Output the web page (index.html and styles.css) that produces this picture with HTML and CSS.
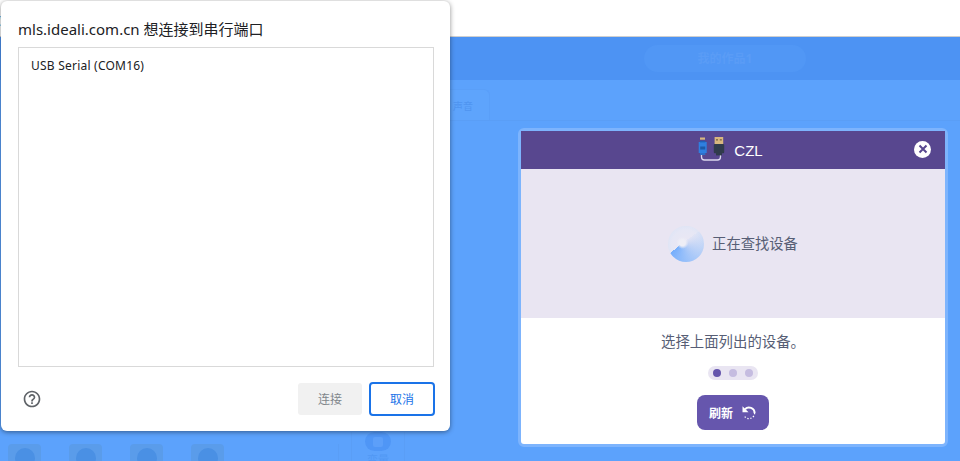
FILE: index.html
```html
<!DOCTYPE html>
<html lang="zh-CN">
<head>
	<meta charset="UTF-8">
	<title>连接设备</title>
	<link rel="stylesheet" href="styles.css">
</head>
<body>
	<div class="topbar"><span class="topbar-text">微</span></div>
	<div class="app">
		<div class="app-head">
			<div class="project-name">我的作品1</div>
		</div>
		<div class="tabs">
			<div class="tab">声音</div>
		</div>
		<div class="stage">
			<div class="palette">
				<div class="tile"><span class="tile-dot"></span></div>
				<div class="tile"><span class="tile-dot"></span></div>
				<div class="tile"><span class="tile-dot"></span></div>
				<div class="tile"><span class="tile-dot"></span></div>
			</div>
			<div class="category">
				<div class="category-pill"><span class="category-icon"></span></div>
				<div class="category-name">变量</div>
			</div>
		</div>
	</div>

	<!-- 浏览器的串口选择框 -->
	<div class="dialog">
		<div class="dialog-title">mls.ideali.com.cn 想连接到串行端口</div>
		<div class="port-list">
			<div class="port">USB Serial (COM16)</div>
		</div>
		<div class="dialog-foot">
			<svg class="help" width="20" height="20" viewBox="0 0 24 24"><path fill="#5f6368" d="M11 18h2v-2h-2v2zm1-16C6.48 2 2 6.48 2 12s4.48 10 10 10 10-4.48 10-10S17.52 2 12 2zm0 18c-4.41 0-8-3.59-8-8s3.59-8 8-8 8 3.59 8 8-3.59 8-8 8zm0-14c-2.21 0-4 1.79-4 4h2c0-1.1.9-2 2-2s2 .9 2 2c0 2-3 1.75-3 5h2c0-2.25 3-2.5 3-5 0-2.21-1.79-4-4-4z"/></svg>
			<div class="btn btn-off">连接</div>
			<div class="btn btn-cancel">取消</div>
		</div>
	</div>

	<!-- 设备连接弹窗 -->
	<div class="modal">
		<div class="modal-head">
			<svg class="usb" width="28" height="28" viewBox="0 0 28 28">
				<path d="M4.5 17.5v3.5q0 3 3 3h13q3 0 3-3v-3.5" fill="none" stroke="#dcd8ee" stroke-width="1.3"/>
				<rect x="3" y="1.5" width="5" height="2.2" fill="#d8b77f"/>
				<rect x="1.7" y="6" width="8" height="11" fill="#2f7fe0"/>
				<rect x="3" y="4.8" width="5.4" height="1.6" fill="#1f5fb8"/>
				<rect x="3.2" y="10.5" width="5" height="3" fill="#1d5aa8"/>
				<rect x="3" y="17" width="5.4" height="2" fill="#2f6fc8"/>
				<rect x="17.6" y="1" width="8.6" height="7" fill="#d8b77f"/>
				<rect x="19" y="3" width="2" height="1.6" fill="#8a744e"/>
				<rect x="22.8" y="3" width="2" height="1.6" fill="#8a744e"/>
				<rect x="16.8" y="8" width="10.4" height="9.3" rx="1" fill="#303b4c"/>
				<rect x="19" y="17" width="6" height="2.4" fill="#303b4c"/>
			</svg>
			<span class="modal-name">CZL</span>
			<div class="close">
				<svg width="10" height="10" viewBox="0 0 10 10"><path d="M1.5 1.5l7 7M8.5 1.5l-7 7" stroke="#58478f" stroke-width="2"/></svg>
			</div>
		</div>
		<div class="search-panel">
			<div class="radar"></div>
			<span class="search-text">正在查找设备</span>
		</div>
		<div class="modal-foot">
			<div class="hint">选择上面列出的设备。</div>
			<div class="dots">
				<span class="dot dot-on"></span>
				<span class="dot"></span>
				<span class="dot"></span>
			</div>
			<div class="refresh">
				<span>刷新</span>
				<svg width="16" height="16" viewBox="0 0 16 16" fill="none" stroke="#fff" stroke-width="2">
					<path d="M4 4.2A5.6 5.6 0 0 1 13.6 8"/>
					<path d="M13.6 8A5.6 5.6 0 0 1 3 10.5" stroke-dasharray="1.3 1.7" stroke-width="1.3"/>
					<path d="M1.5 1.2v6h6z" fill="#fff" stroke="none"/>
				</svg>
			</div>
		</div>
	</div>
</body>
</html>
```

FILE: styles.css
```css
* { margin: 0; padding: 0; box-sizing: border-box; }
html, body { height: 461px; overflow: hidden; }
body { background: #5ca2fc; font-family: "Noto Sans", "Noto Sans CJK SC", sans-serif; position: relative; }

.topbar { height: 37px; background: #fff; border-bottom: 1px solid #cfcfcf; overflow: hidden; }
.topbar-text { display: block; margin: 11px 0 0 -12px; font-size: 13px; line-height: 16px; color: #4a6a90; }

.app-head { height: 43px; background: #4d93f3; display: flex; justify-content: center; padding: 8px 0 0 490px; }
.project-name { width: 162px; height: 27px; border-radius: 14px; background: #5197f5; color: #5a9cf6; font-size: 12px; font-weight: bold; line-height: 27px; text-align: center; }

.tabs { height: 41px; display: flex; padding: 9px 0 0 420px; border-bottom: 1px solid #5a9ef6; }
.tab { width: 70px; height: 31px; padding: 9px 0 0 32px; font-size: 10px; line-height: 15px; color: #4f94f0; background: #5ea4fc; border: 1px solid #5a9ff8; border-bottom: 0; border-radius: 0 6px 0 0; white-space: nowrap; }

.stage { height: 340px; display: flex; align-items: flex-end; }
.palette { width: 339px; height: 17px; display: flex; gap: 28px; padding-left: 8px; border-right: 1px solid #5a9ef6; }
.tile { width: 33px; height: 17px; background: #5a9cea; border-radius: 4px 4px 0 0; overflow: hidden; display: flex; justify-content: center; padding-top: 4px; }
.tile-dot { width: 20px; height: 20px; border-radius: 50%; background: #4a90e4; flex: none; }

.category { width: 54px; height: 29px; margin-left: 12px; border-left: 1px solid #5a9ef6; border-right: 1px solid #5a9ef6; display: flex; flex-direction: column; align-items: center; overflow: hidden; }
.category-pill { width: 26px; height: 19px; border-radius: 10px; background: #4f96f6; display: flex; align-items: center; justify-content: center; flex: none; }
.category-icon { width: 10px; height: 10px; border-radius: 2px; background: #5c9ff9; }
.category-name { font-size: 11px; line-height: 14px; margin-top: 2px; color: #5198f4; }

/* 串口选择框 */
.dialog { position: absolute; left: 1px; top: 1px; width: 449px; height: 430px; background: #fff; border-radius: 6px; box-shadow: 0 1px 5px rgba(0, 0, 0, .45); padding: 17px 16px 0 17px; }
.dialog-title { font-size: 15px; line-height: 22px; color: #202124; white-space: nowrap; }
.port-list { width: 416px; height: 320px; margin-top: 7px; border: 1px solid #d9d9d9; padding: 9px 12px; }
.port { font-size: 12px; line-height: 17px; color: #202124; letter-spacing: .22px; }
.dialog-foot { display: flex; align-items: center; margin-top: 15px; width: 417px; }
.help { margin: 0 auto 0 4px; }
.btn { height: 32px; border-radius: 3px; font-size: 12px; line-height: 34px; text-align: center; }
.btn-off { width: 64px; background: #f1f1f1; color: #80868b; }
.btn-cancel { width: 66px; height: 34px; margin-left: 7px; border: 2px solid #1a73e8; border-radius: 4px; color: #1a73e8; line-height: 32px; }

/* 连接弹窗 */
.modal { position: absolute; left: 518px; top: 128px; width: 430px; height: 319px; border: 3px solid #7db4fd; border-radius: 6px; background: #fff; display: flex; flex-direction: column; }
.modal-head { height: 38px; background: #58478f; display: flex; align-items: center; justify-content: center; gap: 9px; position: relative; flex: none; }
.usb { margin-left: -6px; }
.modal-name { color: #fff; font-family: "Liberation Sans", sans-serif; font-size: 15px; }
.close { position: absolute; right: 14px; top: 9.5px; width: 17px; height: 17px; border-radius: 50%; background: #fff; display: flex; align-items: center; justify-content: center; }

.search-panel { height: 149px; background: #e9e5f2; display: flex; align-items: center; justify-content: center; gap: 8px; flex: none; }
.radar { width: 36px; height: 36px; border-radius: 50%; background: radial-gradient(circle at 40% 47%, #eeeef6 0, #eeeef6 3px, transparent 6px), conic-gradient(from 55deg at 40% 47%, rgba(106, 169, 251, .05) 0deg, rgba(116, 174, 252, .6) 100deg, #74aefc 175deg, transparent 175deg), radial-gradient(circle, #ebe7f3 0, #e6e7f5 55%, #d5e2f7 100%); }
.search-text { font-size: 14.3px; color: #575e75; margin-bottom: 2px; }

.modal-foot { flex: 1; display: flex; flex-direction: column; align-items: center; padding-top: 13px; }
.hint { font-size: 14.4px; line-height: 22px; color: #575e75; }
.dots { width: 50px; height: 14px; margin-top: 13px; border-radius: 7px; background: #e9e5f2; display: flex; align-items: center; justify-content: center; gap: 8px; }
.dot { width: 8px; height: 8px; border-radius: 50%; background: #c5bce0; }
.dot-on { background: #6656ad; }
.refresh { width: 72px; height: 35px; margin-top: 15px; border-radius: 8px; background: #6656ad; color: #fff; font-size: 12px; font-weight: bold; display: flex; align-items: center; justify-content: center; gap: 8px; }
```
